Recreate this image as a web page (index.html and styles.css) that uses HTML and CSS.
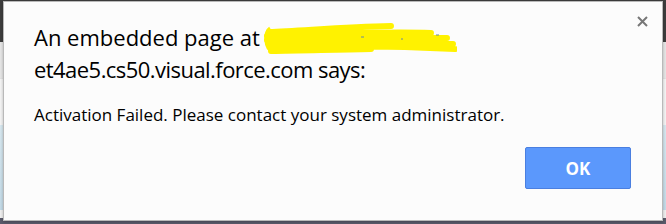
FILE: index.html
```html
<!DOCTYPE html>
<html>
<head>
    <title>Alert</title>
    <link rel="stylesheet" href="styles.css">
</head>
<body>
    <div class="dialog">
        <svg class="close" width="11" height="11" viewBox="0 0 11 11">
            <path d="M1 1L10 10M10 1L1 10" stroke="#777" stroke-width="2" fill="none"/>
        </svg>
        <div class="title">
            <div>An embedded page at <svg class="scribble" width="196" height="32" viewBox="0 0 196 32">
                <path d="M8 9 C40 8 80 4 130 3 M6 13 C50 12 110 8 170 10 M6 17 C60 16 120 14 186 15 M8 21 C70 20 130 19 192 21 M10 25 C60 23 120 22 194 26 M10 28 C40 27 70 27 110 26"
                      stroke="#fff200" stroke-width="6" fill="none" stroke-linecap="round"/>
                <path d="M9 5 C3 9 3 26 12 29" stroke="#fff200" stroke-width="3" fill="none"/>
                <path d="M100 14 h3 M140 16 h2 M175 12 h3" stroke="#6a8aa0" stroke-width="1" fill="none"/>
            </svg></div>
            <div class="host">et4ae5.cs50.visual.force.com says:</div>
        </div>
        <div class="message">Activation Failed. Please contact your system administrator.</div>
        <div class="footer">
            <button class="ok-btn">OK</button>
        </div>
    </div>
</body>
</html>
```

FILE: styles.css
```css
body {
    margin: 0;
    height: 224px;
    overflow: hidden;
    font-family: "Open Sans", sans-serif;
    background: linear-gradient(to bottom,
        #3d3d3d 0, #3d3d3d 42px,
        #e6e6e6 42px, #e6e6e6 78px,
        #cfcfcf 78px, #f4f4f4 79px, #f4f4f4 125px,
        #d8e8f0 125px, #c4dbe8 210px,
        #f0f0f0 210px, #f0f0f0 218px,
        #5a5a6a 218px);
}

.dialog {
    position: relative;
    box-sizing: border-box;
    width: 660px;
    height: 220px;
    margin: 1px 0 0 3px;
    padding: 21px 30px 0 30px;
    background-color: #fcfcfc;
    border: 1px solid #b9b9b9;
    box-shadow: 0 1px 3px rgba(0, 0, 0, 0.25);
    display: flex;
    flex-direction: column;
}

.close {
    position: absolute;
    top: 14px;
    right: 14px;
}

.title {
    font-size: 22px;
    line-height: 28px;
    color: #000;
}

.title .host {
    letter-spacing: -0.55px;
}

.scribble {
    vertical-align: -9px;
    margin-left: -5px;
}

.message {
    margin-top: 20px;
    font-size: 17px;
    color: #000;
}

.footer {
    margin-top: auto;
    display: flex;
    justify-content: flex-end;
    padding: 0 31px 31px 0;
    margin-right: -30px;
}

.ok-btn {
    width: 106px;
    height: 42px;
    background-color: #5b98fc;
    border: 1px solid #4a7fe0;
    border-radius: 2px;
    color: #fff;
    font-family: "Open Sans", sans-serif;
    font-weight: bold;
    font-size: 17px;
}
```
